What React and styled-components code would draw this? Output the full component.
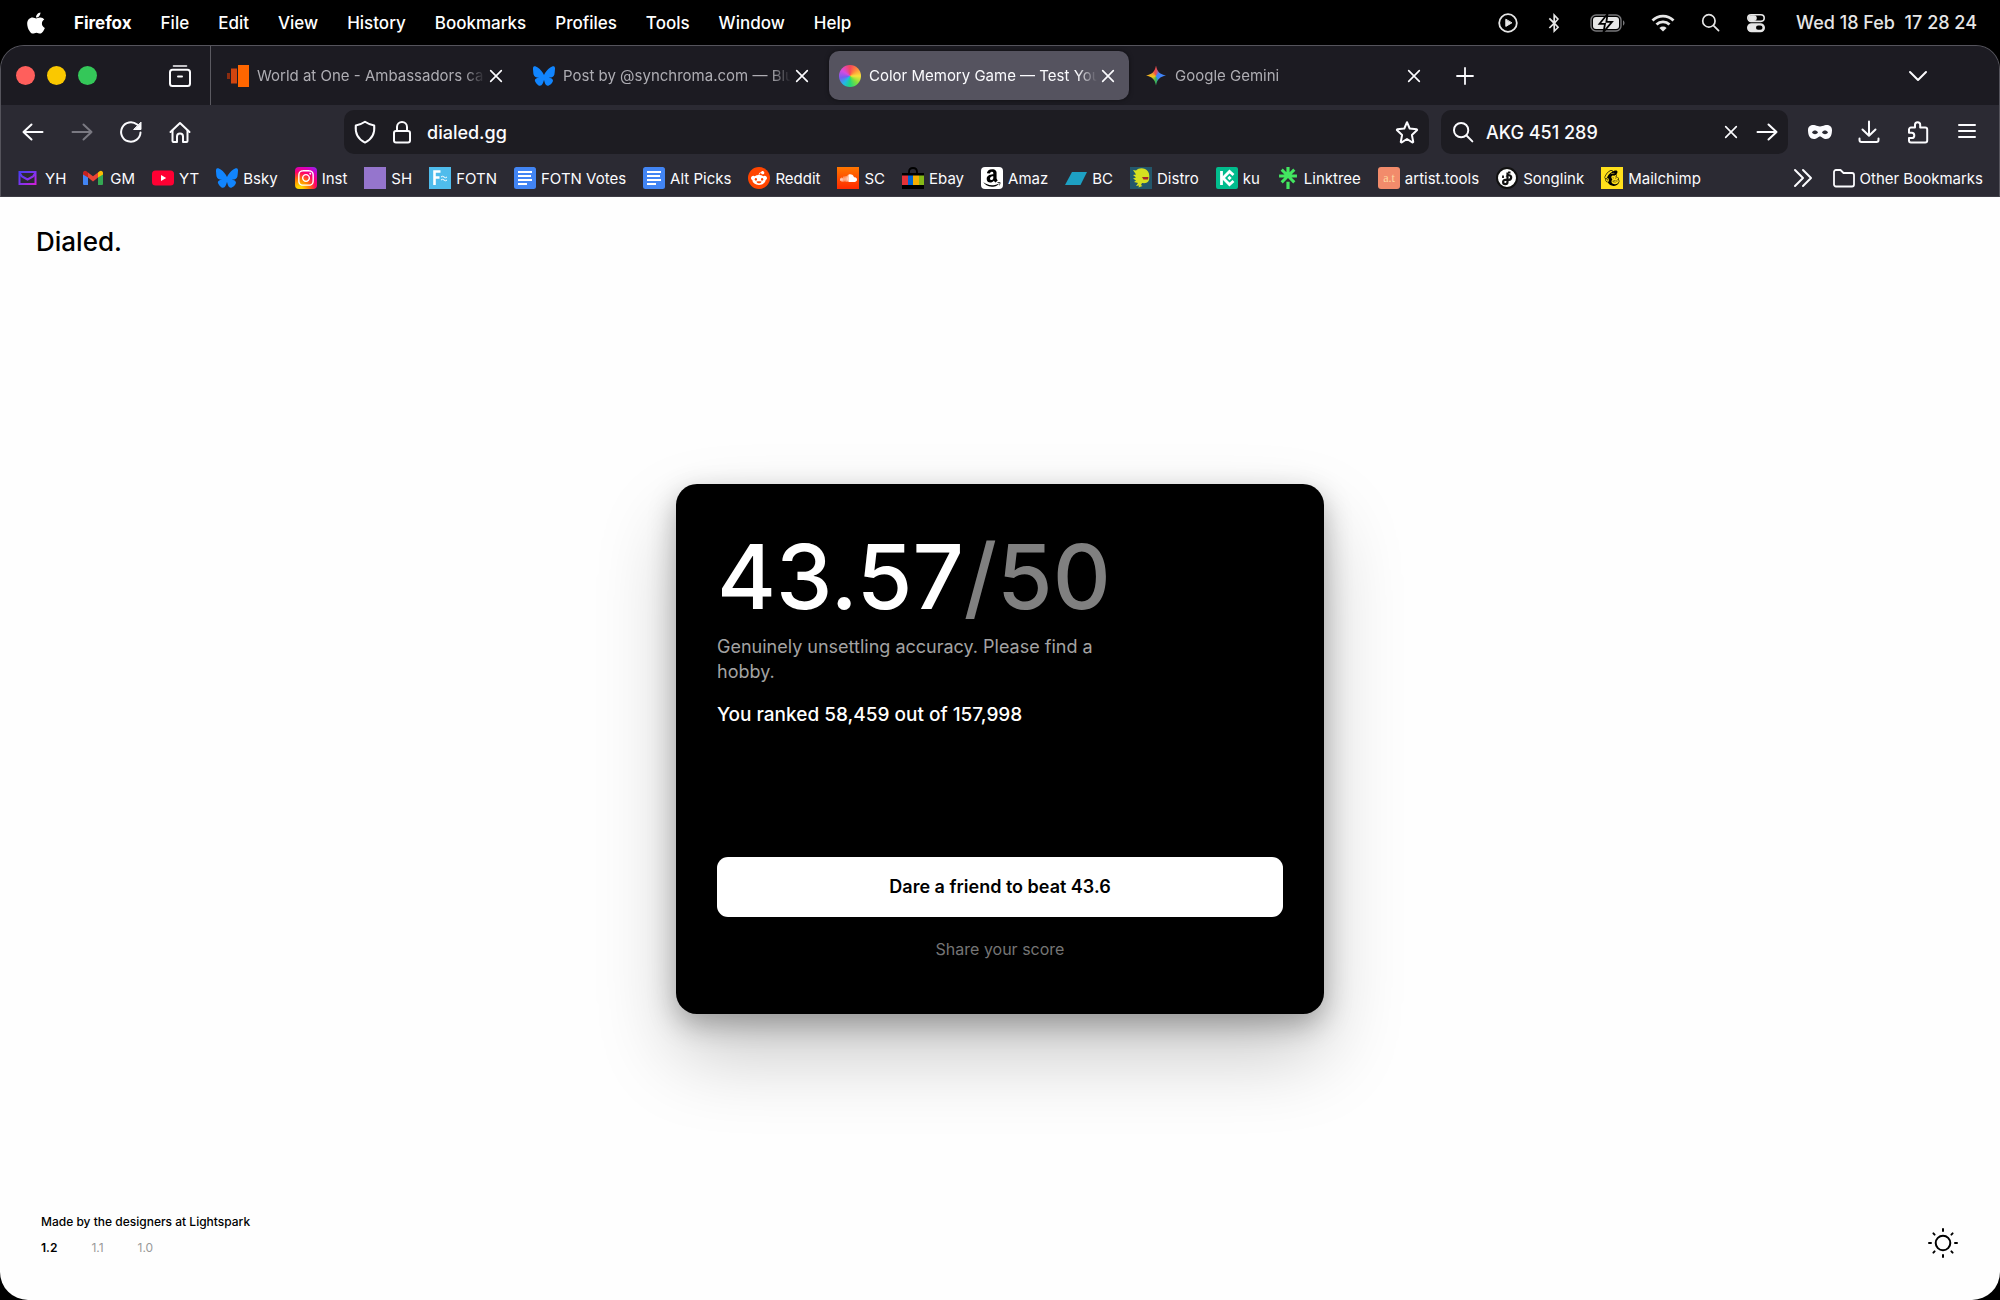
import React from 'react'
import styled, { createGlobalStyle, css } from 'styled-components'
import {
    FaAmazon,
    FaApple,
    FaBluesky,
    FaBluetoothB,
    FaInstagram,
    FaMailchimp,
    FaRedditAlien,
    FaSoundcloud
} from 'react-icons/fa6'
import { SiLinktree } from 'react-icons/si'

const GlobalStyle = createGlobalStyle`
    * {
        box-sizing: border-box;
    }
    body {
        margin: 0;
        background: #000;
        font-family: Inter, "Liberation Sans", sans-serif;
    }
    button, input {
        margin: 0;
        padding: 0;
        border: 0;
        background: none;
        color: inherit;
        font: inherit;
        outline: none;
    }
    a {
        color: inherit;
        text-decoration: none;
    }
`

const Desktop = styled.div`
    display: flex;
    flex-direction: column;
    min-height: 100vh;
`

// mac menu bar

const MenuBar = styled.header`
    display: flex;
    align-items: center;
    justify-content: space-between;
    height: 45px;
    padding: 0 23px 0 27px;
    color: #fff;
    font-size: 17px;
    font-weight: 500;
`

const MenuList = styled.nav`
    display: flex;
    align-items: center;
    gap: 29px;
`

const AppleMenu = styled.button`
    display: flex;
    justify-content: center;
    width: 18px;

    svg {
        flex: none;
    }
`

const MenuItem = styled.button`
    font-weight: ${props => props.$strong ? 700 : 500};
    white-space: nowrap;
`

const StatusList = styled.div`
    display: flex;
    align-items: center;
    gap: 26px;
    color: #e6e6e6;
`

const Clock = styled.time`
    margin-left: 4px;
    font-size: 18px;
    white-space: pre;
`

// browser frame

const Chrome = styled.section`
    overflow: hidden;
    border: 1px solid #55545c;
    border-bottom-color: #3c3b43;
    border-radius: 24px 24px 0 0;
    background: #2b2a33;
    color: #fbfbfe;
`

const TabStrip = styled.div`
    display: flex;
    align-items: center;
    height: 59px;
    background: #1c1b22;
`

const WindowControls = styled.div`
    display: flex;
    align-items: center;
    align-self: stretch;
    gap: 12px;
    width: 210px;
    padding: 0 18px 0 15px;
    border-right: 1px solid #5b5a61;
`

const Light = styled.button`
    width: 19px;
    height: 19px;
    border-radius: 50%;
    background: ${props => props.$color};
`

const IconButton = styled.button`
    display: grid;
    place-items: center;
    flex: none;
    width: 24px;
    height: 24px;
    color: ${props => props.$dim ? '#7a7982' : 'inherit'};
    ${props => props.$push && css`margin-left: auto;`}
`

const Tabs = styled.div`
    display: flex;
    align-items: center;
    gap: 6px;
    padding: 0 18px 0 6px;
`

const Tab = styled.div`
    display: flex;
    align-items: center;
    gap: 8px;
    width: 300px;
    height: 49px;
    padding: 0 10px;
    border-radius: 10px;
    color: ${props => props.$active ? '#fbfbfe' : '#aeadb3'};
    ${props => props.$active && css`
        background: #55535f;
        box-shadow: 0 0 4px rgba(0, 0, 0, .5);
    `}
`

const TabTitle = styled.span`
    flex: 1;
    min-width: 0;
    font-size: 15px;
    line-height: 24px;
    white-space: nowrap;
    mask-image: linear-gradient(to left, transparent, #000 20px);
`

const TabClose = styled.button`
    display: grid;
    place-items: center;
    width: 22px;
    height: 22px;
    margin-left: -8px;
    color: #fbfbfe;
`

const TabMenu = styled.div`
    display: flex;
    align-items: center;
    margin-left: auto;
    padding-right: 69px;
`

const Toolbar = styled.div`
    display: flex;
    align-items: center;
    gap: 12px;
    padding: 5px 20px 8px;
`

const NavButtons = styled.div`
    display: flex;
    flex: none;
    gap: 25px;
    width: 311px;
`

const Field = styled.form`
    display: flex;
    align-items: center;
    gap: ${props => props.$search ? 12 : 13}px;
    flex: ${props => props.$search ? '0 1 347px' : 1};
    min-width: 0;
    height: 44px;
    padding: ${props => props.$search ? '0 9px 0 11px' : '0 10px 0 9px'};
    border-radius: 10px;
    background: #1d1c22;
`

const FieldInput = styled.input`
    flex: 1;
    min-width: 0;
    font-size: 18px;
    font-weight: 500;
`

const ToolButtons = styled.div`
    display: flex;
    gap: 25px;
    margin-left: 8px;
`

const BookmarkBar = styled.nav`
    display: flex;
    align-items: center;
    gap: 17px;
    height: 34px;
    padding: 0 16px 2px 17px;
    font-size: 15px;
    white-space: nowrap;
`

const Bookmark = styled.a`
    display: flex;
    align-items: center;
    gap: 5px;
`

const BookmarkFolder = styled.button`
    display: flex;
    align-items: center;
    gap: 4px;
`

const Favicon = styled.span`
    display: grid;
    place-items: center;
    flex: none;
    width: 22px;
    height: 22px;
    border-radius: ${props => props.$radius || 0}px;
    background: ${props => props.$bg || 'none'};
    color: ${props => props.$color || '#fff'};
`

const GeminiStar = styled(Favicon)`
    background: conic-gradient(#e94b4b 0deg, #3f83f8 50deg, #3f83f8 140deg, #34b45a 180deg, #f4c31b 260deg, #f0a02c 300deg, #e94b4b 345deg);
    clip-path: path('M11 1C12 7 15 10 21 11C15 12 12 15 11 21C10 15 7 12 1 11C7 10 10 7 11 1Z');
`

// page

const Page = styled.div`
    display: grid;
    grid-template-rows: 1fr auto 1fr;
    flex: 1;
    padding: 30px 36px;
    border-radius: 0 0 28px 28px;
    background: #fefefe;
    color: #000;
`

const Logo = styled.a`
    justify-self: start;
    align-self: start;
    font-size: 26px;
    font-weight: 500;
    line-height: 30px;
`

const Card = styled.main`
    display: flex;
    flex-direction: column;
    justify-self: center;
    width: 648px;
    max-width: 100%;
    min-height: 530px;
    padding: 41px;
    border-radius: 21px;
    background: #000;
    color: #fff;
    box-shadow: 0 40px 80px rgba(0, 0, 0, .22), 0 10px 28px rgba(0, 0, 0, .28);
`

const Score = styled.h1`
    margin: 0;
    font-size: 90px;
    font-weight: 500;
    line-height: 104px;
`

const Total = styled.span`
    color: #808080;
`

const Verdict = styled.p`
    max-width: 400px;
    margin: 5px 0 0;
    color: #a3a3a3;
    font-size: 18px;
    line-height: 25px;
`

const Rank = styled.p`
    margin: 18px 0 0;
    font-size: 19px;
    font-weight: 500;
    line-height: 26px;
`

const DareButton = styled.button`
    height: 60px;
    margin-top: auto;
    border-radius: 11px;
    background: #fff;
    color: #000;
    font-size: 18px;
    font-weight: 600;
`

const ShareButton = styled.button`
    align-self: center;
    margin: 21px 0 13px;
    color: #757575;
    font-size: 16px;
    line-height: 22px;
`

const Footer = styled.footer`
    display: flex;
    align-items: flex-end;
    justify-content: space-between;
    align-self: end;
    padding: 0 4px 10px 5px;
    font-size: 12px;
    font-weight: 500;
    line-height: 17px;
`

const Credits = styled.div`
    padding-bottom: 4px;
`

const Versions = styled.div`
    display: flex;
    gap: 34px;
    margin-top: 9px;
`

const Version = styled.a`
    color: ${props => props.$current ? '#000' : '#999'};
    font-weight: ${props => props.$current ? 600 : 400};
`

const ThemeButton = styled.button`
    width: 34px;
    height: 34px;
`

const Line = styled.svg.attrs(props => ({
    viewBox: props.viewBox || '0 0 24 24',
    fill: 'none',
    stroke: 'currentColor',
    strokeLinecap: 'round',
    strokeLinejoin: 'round'
}))`
    display: block;
    flex: none;
    width: ${props => props.$size || 24}px;
    height: ${props => props.$size || 24}px;
    stroke-width: ${props => props.$weight || 2};
`

const Cross = () => (
    <Line $size={22} $weight={1.8}><path d="M6.2 6.2l11.6 11.6M17.8 6.2L6.2 17.8" /></Line>
)

const PlayIcon = () => (
    <Line $size={20} viewBox="0 0 20 20" $weight={1.8}>
        <circle cx="10" cy="10" r="8.8" />
        <path d="M7.8 6.6v6.8l5.8-3.4z" fill="currentColor" strokeWidth="1" />
    </Line>
)

const Wide = styled.svg`
    display: block;
    width: ${props => props.$width}px;
    height: 20px;
`

const BatteryIcon = () => (
    <Wide $width={35} viewBox="0 0 35 20">
        <rect x="1" y="2" width="30" height="16" rx="5" fill="none" stroke="#77777a" strokeWidth="1.4" />
        <rect x="3" y="4" width="26" height="12" rx="3" fill="#e6e6e6" />
        <path d="M33 7.5c2 .6 2 4.4 0 5z" fill="#77777a" />
        <path d="M17.5 1L9.5 10.8h5.5l-1.5 8.2 8.5-10.2h-5.6z" fill="#e6e6e6" stroke="#000" strokeWidth="1.8" />
    </Wide>
)

const WifiIcon = () => (
    <Wide $width={24} viewBox="0 0 24 20" fill="none" stroke="currentColor" strokeWidth="2.8">
        <path d="M1.5 7.5a15 15 0 0 1 21 0M5.5 11.6a9.3 9.3 0 0 1 13 0" />
        <path d="M12 18.6l-3.6-3.7a5.2 5.2 0 0 1 7.2 0z" fill="currentColor" stroke="none" />
    </Wide>
)

const SearchIcon = ({ size }) => (
    <Line $size={size} viewBox="0 0 20 20" $weight={1.8}>
        <circle cx="8.3" cy="8.3" r="6.5" /><path d="M13.2 13.2l5.3 5.3" />
    </Line>
)

const ControlIcon = () => (
    <Line $size={20} viewBox="0 0 20 20" $weight={1.6}>
        <rect x="1.8" y="1.8" width="16.4" height="6.6" rx="3.3" />
        <rect x="3" y="3" width="7" height="4.2" rx="2.1" fill="currentColor" />
        <rect x="1.8" y="11" width="16.4" height="7.4" rx="3.7" fill="currentColor" />
        <rect x="10" y="12.6" width="6.5" height="4.2" rx="2.1" fill="#000" stroke="none" />
    </Line>
)

const ArchiveIcon = () => (
    <Line>
        <path d="M5.5 2h13" strokeWidth="1.6" />
        <rect x="2" y="5.8" width="20" height="16.2" rx="2.5" />
        <path d="M10 12.5h4" />
    </Line>
)

const BackIcon = () => <Line><path d="M2.5 12h19M10.5 4.5L2.5 12l8 7.5" /></Line>
const ForwardIcon = () => <Line><path d="M21.5 12h-19M13.5 4.5L21.5 12l-8 7.5" /></Line>

const ReloadIcon = () => (
    <Line>
        <path d="M21.5 12.5a9.7 9.7 0 1 1-3.4-7.9" />
        <path d="M22 2.5v7h-7z" fill="currentColor" strokeWidth="1" />
    </Line>
)

const HomeIcon = () => (
    <Line>
        <path d="M2.5 12L12 3l9.5 9" />
        <path d="M4.5 10.5V21a1 1 0 0 0 1 1H9v-5.5a3 3 0 0 1 6 0V22h3.5a1 1 0 0 0 1-1V10.5" />
    </Line>
)

const ShieldIcon = () => (
    <Line><path d="M12 1.8c2.8 2 5.6 3 9.2 3.6.8 7.6-2 13.8-9.2 17.2C4.8 19.2 2 13 2.8 5.4 6.4 4.8 9.2 3.8 12 1.8z" /></Line>
)

const LockIcon = () => (
    <Line><rect x="4" y="11" width="16" height="11.5" rx="2" /><path d="M7 11V7a5 5 0 0 1 10 0v4" /></Line>
)

const StarIcon = () => (
    <Line><path d="M12 2.2l2.7 6.3 6.9.8c.6.1.7.7.3 1l-5 4.7 1.3 6.7c.1.5-.4.9-.9.6L12 19l-5.3 3.3c-.5.3-1-.1-.9-.6L7.1 15l-5-4.7c-.4-.3-.3-.9.3-1l6.9-.8z" /></Line>
)

const MaskIcon = () => (
    <Line>
        <path
            fill="currentColor"
            stroke="none"
            fillRule="evenodd"
            d="M0 10c0-4 3.5-5.5 7.2-4.7 2 .5 3 1.2 4.8 1.2s2.8-.7 4.8-1.2C20.5 4.5 24 6 24 10c0 6-2.2 9-6 9-3.3 0-4-2.5-6-2.5S9.3 19 6 19c-3.8 0-6-3-6-9zM4 12.5c.8 1.3 1.8 1.7 3 1.7s2.2-.5 3-1.7c-.8-1.5-1.8-2-3-2s-2.2.5-3 2zM14 12.5c.8 1.3 1.8 1.7 3 1.7s2.2-.5 3-1.7c-.8-1.5-1.8-2-3-2s-2.2.5-3 2z"
        />
    </Line>
)

const DownloadIcon = () => (
    <Line><path d="M12 1.5v14M5.5 9.5l6.5 6.3 6.5-6.3M2.5 18.5V20a2 2 0 0 0 2 2h15a2 2 0 0 0 2-2v-1.5" /></Line>
)

const PuzzleIcon = () => (
    <Line><path d="M5 7.5h4V4.8a2.6 2.6 0 0 1 5.2 0v2.7h5a2 2 0 0 1 2 2v11a2 2 0 0 1-2 2H5a2 2 0 0 1-2-2V18h2.7a2.5 2.5 0 0 0 0-5.2H3V9.5a2 2 0 0 1 2-2z" /></Line>
)

const SunIcon = () => (
    <Line $size={34} viewBox="0 0 34 34">
        <circle cx="17" cy="17" r="7.3" />
        <path d="M17 3v2M17 29v2M3 17h2M29 17h2M7.4 7.4l1.2 1.2M25.4 25.4l1.2 1.2M7.4 26.6l1.2-1.2M25.4 8.6l1.2-1.2" />
    </Line>
)

const Art = styled.svg.attrs({ viewBox: '0 0 22 22' })`
    display: block;
    flex: none;
    width: 22px;
    height: 22px;
`

const YahooMail = () => (
    <Art fill="none" stroke="url(#yh)" strokeWidth="2">
        <defs>
            <linearGradient id="yh" x1="0" y1="0" x2="1" y2="1">
                <stop offset="0" stopColor="#4a3cf0" />
                <stop offset=".5" stopColor="#7a35f0" />
                <stop offset="1" stopColor="#d020d8" />
            </linearGradient>
        </defs>
        <path d="M1.5 5h16v12h-16zM1.5 5.5l2.5 4 5.5 3 5.5-3 2.5-4" />
    </Art>
)

const Gmail = () => (
    <Art>
        <path d="M0 6v11q0 1 1 1h4V9z" fill="#4285f4" />
        <path d="M15 9v9h4q1 0 1-1V6z" fill="#34a853" />
        <path d="M0 7.5V6c0-2 2-3 3.5-1.8L5 5.5v5z" fill="#c5221f" />
        <path d="M20 7.5V6c0-2-2-3-3.5-1.8L15 5.5v5z" fill="#fbbc04" />
        <path d="M5 5.4l5 3.9 5-3.9v5.2l-5 3.8-5-3.8z" fill="#ea4335" />
    </Art>
)

const YouTube = () => (
    <Art>
        <rect y="3.5" width="22" height="15" rx="3.5" fill="#ff0033" />
        <path d="M9 8v6l5.2-3z" fill="#fff" />
    </Art>
)

const Sounds = () => (
    <Art>
        <path d="M0 8h3v6H0z" fill="#8a2c10" />
        <path d="M4 3.5h6v15H4z" fill="#d0450f" />
        <path d="M11 0h11v22H11z" fill="#ff6600" />
    </Art>
)

const DocIcon = () => (
    <Art>
        <rect width="22" height="22" rx="2.5" fill="#4285f4" />
        <path d="M4 5h14M4 9h13M4 13h14M4 17h9" stroke="#fff" strokeWidth="2.2" />
    </Art>
)

const FotnIcon = () => (
    <Art>
        <rect width="22" height="22" fill="#4fbcec" />
        <path d="M5.5 18V4.5h6M5.5 10.5h5" fill="none" stroke="#fff" strokeWidth="2.6" />
        <path d="M12 10q1.5-1.5 3 0t3 0M12 13q1.5-1.5 3 0t3 0" fill="none" stroke="#fff" strokeWidth="1" />
    </Art>
)

const EbayIcon = () => (
    <Art>
        <path d="M7 8V5q0-4 4-4t4 4v3" fill="none" stroke="#000" strokeWidth="1.8" />
        <path d="M0 6h22v16H0z" fill="#000" />
        <path d="M0 8.5h6v9.5H0z" fill="#e53238" />
        <path d="M6 8.5h5v9.5h-5z" fill="#0064d2" />
        <path d="M11 8.5h6v9.5h-6z" fill="#f5af02" />
        <path d="M17 8.5h5v9.5h-5z" fill="#86b817" />
    </Art>
)

const BandcampIcon = () => <Art><path d="M7 5h15l-6.5 13H0z" fill="#1da0c3" /></Art>

const DistroIcon = () => (
    <Art>
        <rect width="22" height="22" fill="#23576b" />
        <path d="M3 3l3 .5C9 .5 15 .5 18 4.5c1.5 2 1.5 5.5 1 8.5-1 3-4 3.5-7 3l-1 2 1.5 1-4 1.5.5-2-3 .5 2-3-4-1 2-1.5-3-2 3-1-3-2.5 3-.5z" fill="#d4e021" />
        <path d="M12 10h6.5l-.5 2.5h-4.5z" fill="#a3262a" />
    </Art>
)

const KucoinIcon = () => (
    <Art>
        <rect width="22" height="22" rx="2" fill="#01bc8d" />
        <path d="M5.5 4v14" fill="none" stroke="#fff" strokeWidth="2.8" />
        <path d="M17.5 8l-4-3.5L7 11l6.5 6.5 4-3.5" fill="none" stroke="#fff" strokeWidth="2.8" />
        <path d="M13.5 8.8l2.2 2.2-2.2 2.2-2.2-2.2z" fill="#fff" />
    </Art>
)

const ToolsIcon = () => (
    <Art>
        <rect width="22" height="22" rx="3" fill="#f28b6b" />
        <text x="11" y="15" textAnchor="middle" fontFamily="Liberation Serif, serif" fontSize="12" fill="#ffd9a0">a.t</text>
    </Art>
)

const SonglinkIcon = () => (
    <Art fill="none" stroke="#111" strokeWidth="2">
        <circle cx="11" cy="11" r="10" fill="#fff" />
        <path d="M11.5 5.5V15a2.2 2.2 0 1 1-2.2-2.2H13a2.3 2.3 0 1 0-2.3-3" strokeWidth="2.2" />
        <path d="M12 5.5h2.5M7 8.5v2.5" strokeWidth="1.8" />
    </Art>
)

const bookmarks = [
    { name: 'YH', icon: <YahooMail /> },
    { name: 'GM', icon: <Gmail /> },
    { name: 'YT', icon: <YouTube /> },
    { name: 'Bsky', icon: <Favicon $color="#1185fe"><FaBluesky size={22} /></Favicon> },
    {
        name: 'Inst',
        icon: (
            <Favicon $radius={4} $bg="radial-gradient(circle at 20% 100%, #ffd600 10%, #ff7a00 35%, #ff0069 60%, #d300c5 80%, #7638fa)">
                <FaInstagram size={18} />
            </Favicon>
        )
    },
    { name: 'SH', icon: <Favicon $bg="#9575cd" /> },
    { name: 'FOTN', icon: <FotnIcon /> },
    { name: 'FOTN Votes', icon: <DocIcon /> },
    { name: 'Alt Picks', icon: <DocIcon /> },
    { name: 'Reddit', icon: <Favicon $radius={11} $bg="#ff4500"><FaRedditAlien size={16} /></Favicon> },
    { name: 'SC', icon: <Favicon $bg="linear-gradient(#ff7700, #ff2a00)"><FaSoundcloud size={17} /></Favicon> },
    { name: 'Ebay', icon: <EbayIcon /> },
    { name: 'Amaz', icon: <Favicon $radius={4} $bg="#fff" $color="#000"><FaAmazon size={20} /></Favicon> },
    { name: 'BC', icon: <BandcampIcon /> },
    { name: 'Distro', icon: <DistroIcon /> },
    { name: 'ku', icon: <KucoinIcon /> },
    { name: 'Linktree', icon: <Favicon $color="#43e660"><SiLinktree size={22} /></Favicon> },
    { name: 'artist.tools', icon: <ToolsIcon /> },
    { name: 'Songlink', icon: <SonglinkIcon /> },
    { name: 'Mailchimp', icon: <Favicon $bg="#ffe01b" $color="#000"><FaMailchimp size={18} /></Favicon> }
]

const tabs = [
    { title: 'World at One - Ambassadors ca', icon: <Sounds /> },
    { title: 'Post by @synchroma.com — Blu', icon: <Favicon $color="#1185fe"><FaBluesky size={22} /></Favicon> },
    {
        title: 'Color Memory Game — Test You',
        active: true,
        icon: <Favicon $radius={11} $bg="conic-gradient(#f5455c, #ff8a3c 45deg, #f7e03c 90deg, #7ee03c 135deg, #1fd77c 180deg, #22b8e8 220deg, #7a5cf0 260deg, #d84be0 305deg, #f5455c)" />
    },
    { title: 'Google Gemini', icon: <GeminiStar /> }
]

const menus = ['File', 'Edit', 'View', 'History', 'Bookmarks', 'Profiles', 'Tools', 'Window', 'Help']

class SystemMenu extends React.Component {
    render() {
        return (
            <MenuBar>
                <MenuList>
                    <AppleMenu aria-label="Apple"><FaApple size={24} /></AppleMenu>
                    <MenuItem $strong>Firefox</MenuItem>
                    {menus.map(name => <MenuItem key={name}>{name}</MenuItem>)}
                </MenuList>
                <StatusList>
                    <PlayIcon />
                    <FaBluetoothB size={20} />
                    <BatteryIcon />
                    <WifiIcon />
                    <SearchIcon size={19} />
                    <ControlIcon />
                    <Clock>Wed 18 Feb  17 28 24</Clock>
                </StatusList>
            </MenuBar>
        )
    }
}

class Browser extends React.Component {
    render() {
        return (
            <Chrome>
                <TabStrip>
                    <WindowControls>
                        <Light $color="#ff5f5c" aria-label="Close window" />
                        <Light $color="#fac800" aria-label="Minimise window" />
                        <Light $color="#34c759" aria-label="Zoom window" />
                        <IconButton $push aria-label="Recent browsing"><ArchiveIcon /></IconButton>
                    </WindowControls>
                    <Tabs role="tablist">
                        {tabs.map(tab => (
                            <Tab key={tab.title} role="tab" aria-selected={!!tab.active} $active={tab.active}>
                                {tab.icon}
                                <TabTitle>{tab.title}</TabTitle>
                                <TabClose aria-label="Close tab"><Cross /></TabClose>
                            </Tab>
                        ))}
                    </Tabs>
                    <IconButton aria-label="New tab">
                        <Line $weight={1.8}><path d="M12 4v16M4 12h16" /></Line>
                    </IconButton>
                    <TabMenu>
                        <IconButton aria-label="List all tabs"><Line><path d="M4 8l8 8 8-8" /></Line></IconButton>
                    </TabMenu>
                </TabStrip>
                <Toolbar>
                    <NavButtons>
                        <IconButton aria-label="Back"><BackIcon /></IconButton>
                        <IconButton aria-label="Forward" $dim><ForwardIcon /></IconButton>
                        <IconButton aria-label="Reload"><ReloadIcon /></IconButton>
                        <IconButton aria-label="Home"><HomeIcon /></IconButton>
                    </NavButtons>
                    <Field>
                        <ShieldIcon />
                        <LockIcon />
                        <FieldInput aria-label="Address" defaultValue="dialed.gg" />
                        <IconButton type="button" aria-label="Bookmark this page"><StarIcon /></IconButton>
                    </Field>
                    <Field $search>
                        <SearchIcon size={22} />
                        <FieldInput aria-label="Search" defaultValue="AKG 451 289" />
                        <IconButton type="button" aria-label="Clear"><Cross /></IconButton>
                        <IconButton type="button" aria-label="Go"><ForwardIcon /></IconButton>
                    </Field>
                    <ToolButtons>
                        <IconButton aria-label="Private mask"><MaskIcon /></IconButton>
                        <IconButton aria-label="Downloads"><DownloadIcon /></IconButton>
                        <IconButton aria-label="Extensions"><PuzzleIcon /></IconButton>
                        <IconButton aria-label="Application menu"><Line><path d="M4 5h16M4 11h16M4 17h16" /></Line></IconButton>
                    </ToolButtons>
                </Toolbar>
                <BookmarkBar>
                    {bookmarks.map(item => (
                        <Bookmark key={item.name} href="#">{item.icon}{item.name}</Bookmark>
                    ))}
                    <IconButton $push aria-label="More bookmarks">
                        <Line><path d="M4 4l8 8-8 8M12 4l8 8-8 8" /></Line>
                    </IconButton>
                    <BookmarkFolder>
                        <Line $weight={1.8}><path d="M2 6a2 2 0 0 1 2-2h4.5l3 3H20a2 2 0 0 1 2 2v9.5a2 2 0 0 1-2 2H4a2 2 0 0 1-2-2z" /></Line>
                        Other Bookmarks
                    </BookmarkFolder>
                </BookmarkBar>
            </Chrome>
        )
    }
}

class App extends React.Component {
    render() {
        return (
            <Desktop>
                <GlobalStyle />
                <SystemMenu />
                <Browser />
                <Page>
                    <Logo href="#">Dialed.</Logo>
                    <Card>
                        <Score>43.57<Total>/50</Total></Score>
                        <Verdict>Genuinely unsettling accuracy. Please find a hobby.</Verdict>
                        <Rank>You ranked 58,459 out of 157,998</Rank>
                        <DareButton>Dare a friend to beat 43.6</DareButton>
                        <ShareButton>Share your score</ShareButton>
                    </Card>
                    <Footer>
                        <Credits>
                            <a href="#">Made by the designers at Lightspark</a>
                            <Versions>
                                <Version href="#" $current>1.2</Version>
                                <Version href="#">1.1</Version>
                                <Version href="#">1.0</Version>
                            </Versions>
                        </Credits>
                        <ThemeButton aria-label="Light theme"><SunIcon /></ThemeButton>
                    </Footer>
                </Page>
            </Desktop>
        )
    }
}

export default App
